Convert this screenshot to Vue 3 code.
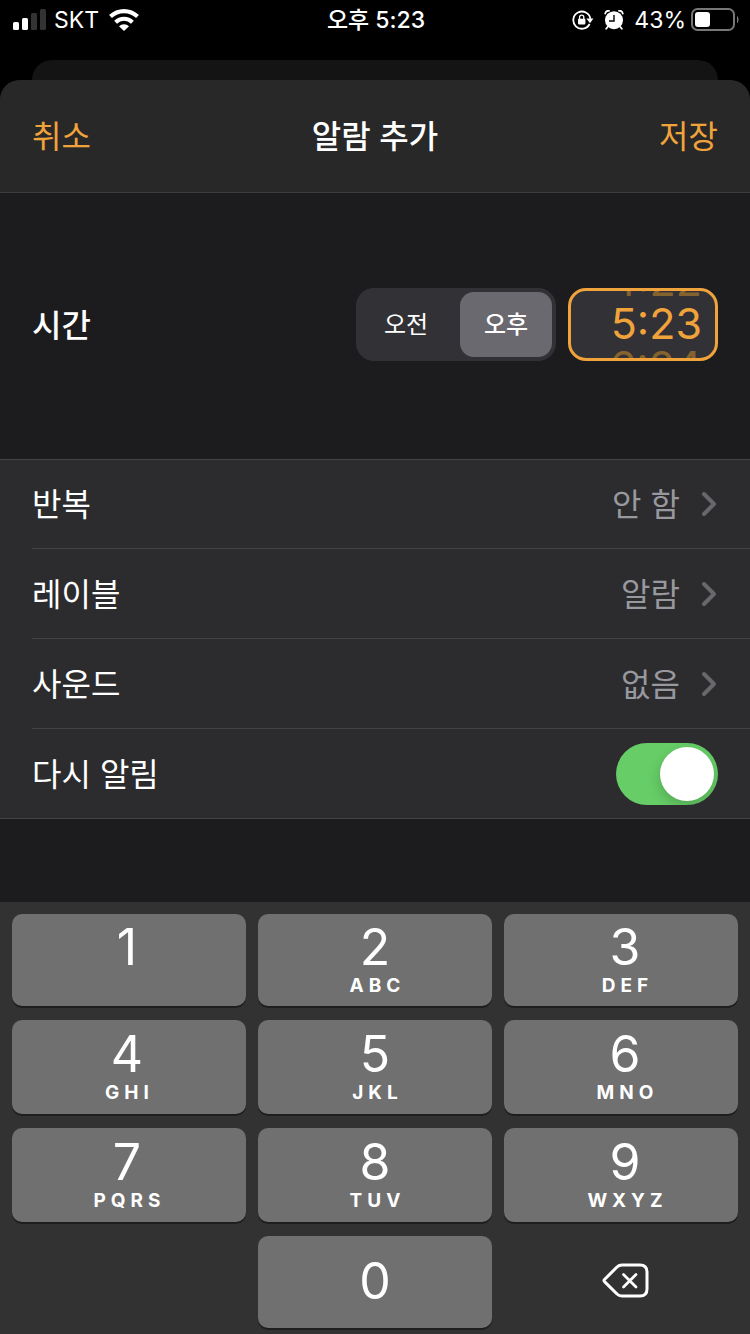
<script setup>
import { ref } from 'vue'

const period = ref('pm')
const time = ref('5:23')
const snooze = ref(true)

const periods = [
  { id: 'am', label: '오전' },
  { id: 'pm', label: '오후' },
]
const options = [
  { label: '반복', value: '안 함' },
  { label: '레이블', value: '알람' },
  { label: '사운드', value: '없음' },
]
const keys = [
  { digit: '1', letters: '\u00a0' },
  { digit: '2', letters: 'ABC' },
  { digit: '3', letters: 'DEF' },
  { digit: '4', letters: 'GHI' },
  { digit: '5', letters: 'JKL' },
  { digit: '6', letters: 'MNO' },
  { digit: '7', letters: 'PQRS' },
  { digit: '8', letters: 'TUV' },
  { digit: '9', letters: 'WXYZ' },
]
</script>

<template>
  <div class="screen">
    <header class="status">
      <div class="status-left">
        <svg class="signal" width="34" height="22" viewBox="0 0 34 22" aria-hidden="true">
          <rect x="0" y="13" width="6" height="8" rx="1.5" fill="#fff" />
          <rect x="9" y="9" width="6" height="12" rx="1.5" fill="#fff" />
          <rect x="18" y="4" width="6" height="17" rx="1.5" fill="#333" />
          <rect x="27" y="0" width="6" height="21" rx="1.5" fill="#333" />
        </svg>
        <span class="carrier">SKT</span>
        <svg width="30" height="22" viewBox="0 0 30 22" aria-hidden="true">
          <g fill="none" stroke="#fff">
            <path d="M1.5 7.6a19.4 19.4 0 0 1 27 0" stroke-width="4.2" />
            <path d="M6.6 13.2a12 12 0 0 1 16.8 0" stroke-width="4" />
          </g>
          <path d="M10 17.2a7.2 7.2 0 0 1 10 0L15 22z" fill="#fff" />
        </svg>
      </div>
      <div class="clock">오후 5:23</div>
      <div class="status-right">
        <svg width="22" height="20" viewBox="0 0 22 20" aria-hidden="true">
          <path d="M17.6 14A8.6 8.6 0 1 1 18.4 8.8" fill="none" stroke="#fff" stroke-width="1.8" />
          <path d="M14.4 8.6h7L18 13.2z" fill="#fff" />
          <rect x="6" y="8.8" width="7.4" height="5.6" rx="0.8" fill="#fff" />
          <path d="M7.6 9V7.2a2.1 2.1 0 0 1 4.2 0V9" fill="none" stroke="#fff" stroke-width="1.3" />
        </svg>
        <svg class="alarm" width="20" height="20" viewBox="0 0 20 20" aria-hidden="true">
          <circle cx="10" cy="10.2" r="9" fill="#fff" />
          <path d="M1.2 3.6A3.4 3.4 0 0 1 5 0.8M18.8 3.6A3.4 3.4 0 0 0 15 0.8" fill="none" stroke="#fff" stroke-width="1.8" stroke-linecap="round" />
          <path d="M4 16.5l-1.800 2.300M16 16.500l1.800 2.300" fill="none" stroke="#fff" stroke-width="1.800" stroke-linecap="round" />
          <path d="M10 5v6H5" fill="none" stroke="#000" stroke-width="1.4" />
        </svg>
        <span class="percent">43%</span>
        <svg width="48" height="24" viewBox="0 0 48 24" aria-hidden="true">
          <rect x="1" y="1" width="42" height="21" rx="5.5" fill="none" stroke="#777" stroke-width="2" />
          <rect x="4" y="4" width="15" height="15" rx="3" fill="#fff" />
          <path d="M46 8c2 1.2 2 6 0 7.2z" fill="#777" />
        </svg>
      </div>
    </header>

    <div class="behind"></div>

    <main class="sheet">
      <div class="nav">
        <button type="button" class="link">취소</button>
        <h1>알람 추가</h1>
        <button type="button" class="link end">저장</button>
      </div>

      <section class="time">
        <label for="time-field" class="time-label">시간</label>
        <div class="segments" role="radiogroup" aria-label="오전 오후">
          <label v-for="p in periods" :key="p.id" class="segment" :class="{ on: period === p.id }">
            <input v-model="period" type="radio" name="period" :value="p.id" />
            <span>{{ p.label }}</span>
          </label>
        </div>
        <div class="wheel">
          <span class="ghost" aria-hidden="true">4:22</span>
          <input id="time-field" v-model="time" type="text" inputmode="numeric" />
          <span class="ghost" aria-hidden="true">6:24</span>
        </div>
      </section>

      <section class="list">
        <button v-for="o in options" :key="o.label" type="button" class="row">
          <span class="row-label">{{ o.label }}</span>
          <span class="row-value">{{ o.value }}</span>
          <svg width="16" height="26" viewBox="0 0 16 26" aria-hidden="true">
            <path d="M3 3l10 10L3 23" fill="none" stroke="#68686c" stroke-width="4" stroke-linecap="round" stroke-linejoin="round" />
          </svg>
        </button>
        <label class="row">
          <span class="row-label">다시 알림</span>
          <input v-model="snooze" type="checkbox" role="switch" class="switch" />
        </label>
      </section>
    </main>

    <section class="keypad" aria-label="숫자 키패드">
      <button v-for="k in keys" :key="k.digit" type="button" class="key">
        <span class="digit">{{ k.digit }}</span>
        <span class="letters">{{ k.letters }}</span>
      </button>
      <button type="button" class="key zero"><span class="digit">0</span></button>
      <button type="button" class="delete" aria-label="지우기">
        <svg width="48" height="36" viewBox="0 0 48 36" fill="none" stroke="#fff" stroke-linecap="round" stroke-linejoin="round" aria-hidden="true">
          <path d="M3.5 16.5L16 4Q18 2 21 2H39Q46 2 46 9V26Q46 33 39 33H21Q18 33 16 31L3.5 18.600Q2.500 17.500 3.5 16.500Z" stroke-width="3" />
          <path d="M22.500 11.500l12.500 12.500M35 11.500L22.500 24" stroke-width="2.800" />
        </svg>
      </button>
    </section>
  </div>
</template>

<style>
body {
  background: #000;
}
</style>

<style scoped>
.screen {
  display: flex;
  flex-direction: column;
  min-height: 100vh;
  background: #000;
  color: #fff;
  font-family: Inter, "Noto Sans CJK KR", sans-serif;
}
button,
input {
  margin: 0;
  padding: 0;
  border: 0;
  background: none;
  color: inherit;
  font: inherit;
}
svg {
  display: block;
  flex: none;
}
.status {
  display: grid;
  grid-template-columns: 1fr auto 1fr;
  align-items: center;
  height: 40px;
  margin-bottom: 20px;
  padding: 0 11px 0 13px;
  font-size: 23px;
  line-height: 40px;
}
.status-left,
.status-right {
  display: flex;
  align-items: center;
  height: 40px;
}
.status-right {
  justify-content: flex-end;
}
.clock {
  font-weight: 500;
}
.carrier {
  margin: 0 10px 0 7px;
}
.alarm {
  margin: 0 10px;
}
.percent {
  margin-right: 5px;
}
.behind {
  height: 20px;
  margin: 0 32px;
  border-radius: 20px 20px 0 0;
  background: #141414;
}
.sheet {
  flex: 1;
  overflow: hidden;
  border-radius: 20px 20px 0 0;
  background: #1c1c1e;
  font-size: 32px;
  line-height: 48px;
}
.nav {
  display: grid;
  grid-template-columns: 1fr auto 1fr;
  align-items: center;
  height: 110px;
  padding: 2px 32px 0;
  border-bottom: 1px solid #3d3d40;
  background: #282828;
}
.nav h1 {
  margin: 0;
  font-size: 32px;
  font-weight: 500;
}
.link {
  justify-self: start;
  color: #f1a33b;
}
.end {
  justify-self: end;
}
.time {
  display: flex;
  align-items: center;
  gap: 12px;
  padding: 95px 32px 98px;
}
.time-label,
.row-label,
.row-value {
  padding-top: 2px;
}
.time-label {
  flex: 1;
  font-weight: 500;
}
.segments {
  display: grid;
  grid-template-columns: 1fr 92px;
  gap: 8px;
  box-sizing: border-box;
  width: 200px;
  height: 73px;
  padding: 4px;
  border-radius: 18px;
  background: #323136;
}
.segment {
  display: flex;
  align-items: center;
  justify-content: center;
  border-radius: 14px;
  font-size: 24px;
}
.segment input {
  position: absolute;
  opacity: 0;
}
.on {
  background: #6a696f;
  font-weight: 500;
}
.wheel {
  display: flex;
  flex-direction: column;
  justify-content: center;
  box-sizing: border-box;
  width: 150px;
  height: 73px;
  padding: 0 13px 3px;
  overflow: hidden;
  border: 3px solid #f1a33b;
  border-radius: 18px;
  background: #323136;
  color: #f1a33b;
  font-size: 43px;
  line-height: 43px;
  text-align: right;
}
.wheel input {
  width: 100%;
  height: 43px;
  flex: none;
  text-align: right;
  outline: 0;
}
.ghost {
  color: #85632f;
}
.list {
  border-top: 1px solid #434346;
  border-bottom: 1px solid #434346;
  background: #2c2c2e;
}
.row {
  display: flex;
  align-items: center;
  width: calc(100% - 32px);
  height: 88px;
  box-sizing: border-box;
  margin-left: 32px;
  padding-right: 33px;
  text-align: left;
}
.row + .row {
  height: 90px;
  border-top: 1px solid #434346;
}
.row-label {
  flex: 1;
}
.row-value {
  margin-right: 21px;
  color: #98989f;
}
.switch {
  appearance: none;
  width: 102px;
  height: 62px;
  margin-right: -1px;
  border-radius: 31px;
  background: #39393d;
}
.switch::before {
  content: "";
  display: block;
  width: 54px;
  height: 54px;
  margin: 4px;
  border-radius: 50%;
  background: #fff;
  box-shadow: 0 5px 14px rgba(0, 0, 0, 0.2);
}
.switch:checked {
  overflow: hidden;
  background: #67ce67;
}
.switch:checked::before {
  margin-left: 44px;
}
.keypad {
  display: grid;
  grid-template-columns: repeat(3, 1fr);
  grid-template-rows: 92px 94px 94px 92px;
  gap: 14px 12px;
  padding: 12px 12px 6px;
  background: #323232;
}
.key {
  display: flex;
  flex-direction: column;
  align-items: center;
  justify-content: center;
  padding-bottom: 3px;
  border-radius: 10px;
  background: #707070;
  box-shadow: 0 2px 0 #1e1e1e;
}
.key:nth-child(3n + 1):not(.zero) {
  padding-right: 4px;
}
.key:nth-child(3n),
.delete {
  padding-left: 8px;
}
.digit {
  font-size: 50px;
  line-height: 54px;
}
.letters {
  padding-left: 5px;
  font-size: 19px;
  font-weight: 700;
  line-height: 24px;
  letter-spacing: 5px;
}
.zero {
  grid-column: 2;
}
.delete {
  display: flex;
  align-items: center;
  justify-content: center;
  padding-bottom: 3px;
}
</style>
